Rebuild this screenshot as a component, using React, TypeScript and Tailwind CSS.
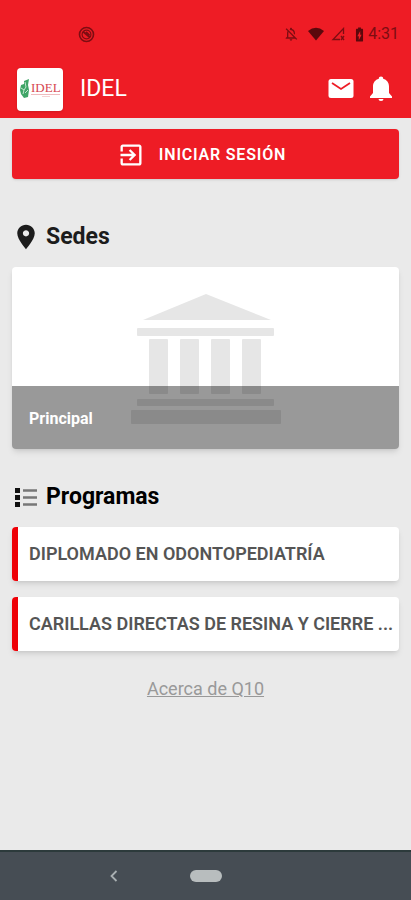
import { IoMdExit, IoMdPin } from "react-icons/io";
import {
  MdBatteryChargingFull,
  MdOutlineNotificationsOff,
} from "react-icons/md";

const PROGRAMS = [
  "DIPLOMADO EN ODONTOPEDIATRÍA",
  "CARILLAS DIRECTAS DE RESINA Y CIERRE ...",
];

function StatusBar() {
  return (
    <div className="flex h-15 items-center justify-between pt-2 pr-3 pl-[78px] text-[#7d0d12]">
      <svg width="17" height="17" viewBox="0 0 17 17" fill="none">
        <circle cx="8.5" cy="8.5" r="7" stroke="currentColor" strokeWidth="1.6" />
        <circle cx="8.5" cy="8.5" r="4.4" stroke="currentColor" strokeWidth="1.2" />
        <path d="M5 5.5l7 6M8 6l3.5 3.5" stroke="currentColor" strokeWidth="1.8" />
      </svg>
      <div className="flex items-center">
        <MdOutlineNotificationsOff className="mr-2 size-4" />
        <svg width="18" height="14" viewBox="0 0 18 14" className="mr-1.5">
          <path d="M1 4Q9-2.500 17 4L9 13.500z" fill="#5c080c" />
        </svg>
        <svg width="14" height="14" viewBox="0 0 14 14" fill="none" className="mr-1.5">
          <path
            d="M9 12.500H2L12.500 1.500V7M10 9l3 4M13 9l-3 4"
            stroke="currentColor"
            strokeWidth="1.300"
          />
        </svg>
        <MdBatteryChargingFull className="size-[17px] text-[#5c080c]" />
        <span className="text-base leading-5">4:31</span>
      </div>
    </div>
  );
}

function Logo() {
  return (
    <div className="flex h-[43px] w-[46px] items-center justify-center rounded-sm bg-white shadow">
      <svg width="42" height="22" viewBox="0 0 42 22" role="img" aria-label="IDEL">
        <path
          d="M5 3l5-2-1 6 1 5-1 7-4 1-3-4-1-4 1-5 3-1z"
          fill="#3fa567"
        />
        <path
          d="M6 4l1 5-2 3M2 10l3 2-1 4M9 12l-3 3"
          stroke="#c4e6d0"
          strokeWidth="1"
          fill="none"
        />
        <text
          x="12"
          y="14"
          fontFamily="Liberation Serif, serif"
          fontSize="13"
          fill="#d64550"
        >
          IDEL
        </text>
        <path d="M12 16.500h29" stroke="#eba9ad" strokeWidth="0.800" />
        <path d="M23 18.500h8" stroke="#f1c5c7" strokeWidth="0.800" />
      </svg>
    </div>
  );
}

function MailIcon() {
  return (
    <svg width="28" height="28" viewBox="0 0 28 28" fill="none">
      <rect x="1.500" y="4" width="25" height="19" rx="2.500" fill="white" />
      <path d="M5 8l9 6 9-6" stroke="#ee1c25" strokeWidth="1.800" />
    </svg>
  );
}

function BellIcon() {
  return (
    <svg width="28" height="28" viewBox="0 0 28 28" fill="white">
      <path d="M14 1.500c1.300 0 2.200 0.900 2.200 2.200 3.600 1 5.800 4 5.800 7.800v6.500l3 3.500v1.500H3v-1.500L6 18v-6.500c0-3.800 2.200-6.800 5.800-7.800 0-1.300 0.900-2.200 2.200-2.200z" />
      <path d="M11.500 24h5a2.500 2 0 0 1-5 0z" />
    </svg>
  );
}

function Header() {
  return (
    <header className="h-[118px] bg-[#ee1c25]">
      <StatusBar />
      <div className="flex h-[58px] items-center pr-4 pl-[17px] text-white">
        <Logo />
        <h1 className="ml-[17px] flex-1 text-[23px] leading-7">IDEL</h1>
        <button type="button" aria-label="Mensajes" className="mr-3">
          <MailIcon />
        </button>
        <button type="button" aria-label="Notificaciones">
          <BellIcon />
        </button>
      </div>
    </header>
  );
}

function BankIcon() {
  return (
    <svg width="150" height="131" viewBox="0 0 150 131" fill="#e6e6e6">
      <path d="M12 27L75 1l65 26z" />
      <rect x="6" y="35" width="137" height="8" rx="1" />
      <rect x="18" y="46" width="19" height="55" rx="1" />
      <rect x="49" y="46" width="19" height="55" rx="1" />
      <rect x="80" y="46" width="19" height="55" rx="1" />
      <rect x="111" y="46" width="19" height="55" rx="1" />
      <rect x="6" y="106" width="137" height="7" rx="1" />
      <rect x="0" y="117" width="150" height="14" rx="1" />
    </svg>
  );
}

function ListIcon() {
  return (
    <svg viewBox="0 0 28 28" className="size-7">
      <path
        d="M3 5h5v5H3zM3 12h5v5H3zM3 19h5v5H3z"
        fill="#111111"
      />
      <path
        d="M11 7.500h14M11 14.500h14M11 21.500h14"
        stroke="#777777"
        strokeWidth="2.500"
      />
    </svg>
  );
}

export default function App() {
  return (
    <div className="flex min-h-screen flex-col bg-[#eaeaea] font-['Roboto',sans-serif]">
      <Header />

      <main className="flex-1 px-3 pt-[11px]">
        <button
          type="button"
          className="flex h-[50px] w-full items-center justify-center gap-3.5 rounded-sm bg-[#ee1c25] pt-0.5 pr-2 text-base font-semibold tracking-wider text-white shadow-sm"
        >
          <IoMdExit className="size-7" />
          INICIAR SESIÓN
        </button>

        <section className="pt-11">
          <h2 className="flex items-center gap-1.5 text-[23px] leading-7 font-bold text-[#1c1c1c]">
            <IoMdPin className="size-7" />
            Sedes
          </h2>
          <a
            href="#principal"
            className="relative mt-4 flex h-[182px] justify-center overflow-hidden rounded bg-white pt-[26px] shadow-md"
          >
            <BankIcon />
            <span className="absolute inset-x-0 bottom-0 flex h-[63px] items-center bg-black/40 px-[17px] pt-0.5 text-base font-bold text-white">
              Principal
            </span>
          </a>
        </section>

        <section className="pt-[34px]">
          <h2 className="flex items-center gap-1.5 text-[23px] leading-7 font-bold text-black">
            <ListIcon />
            Programas
          </h2>
          <ul className="mt-4 space-y-4">
            {PROGRAMS.map((name) => (
              <li key={name}>
                <a
                  href="#programa"
                  className="flex h-[54px] items-center overflow-hidden rounded bg-white shadow-md"
                >
                  <span className="w-[6px] shrink-0 self-stretch bg-[#ee0006]" />
                  <span className="truncate pl-[11px] text-lg font-semibold text-[#555555]">
                    {name}
                  </span>
                </a>
              </li>
            ))}
          </ul>
        </section>

        <p className="pt-[26px] text-center text-lg leading-6">
          <a href="#acerca" className="text-[#999999] underline">
            Acerca de Q10
          </a>
        </p>
      </main>

      <nav className="flex h-[50px] items-center justify-center gap-[72px] border-t-2 border-[#2c3a3b] bg-[#464d54]">
        <button type="button" aria-label="Atrás">
          <svg width="8" height="12" viewBox="0 0 8 12" fill="none">
            <path d="M6.500 1L1.500 6l5 5" stroke="#a9b0b2" strokeWidth="1.800" />
          </svg>
        </button>
        <button
          type="button"
          aria-label="Inicio"
          className="mr-20 h-3 w-8 rounded-full bg-[#b8bdbe]"
        />
      </nav>
    </div>
  );
}
